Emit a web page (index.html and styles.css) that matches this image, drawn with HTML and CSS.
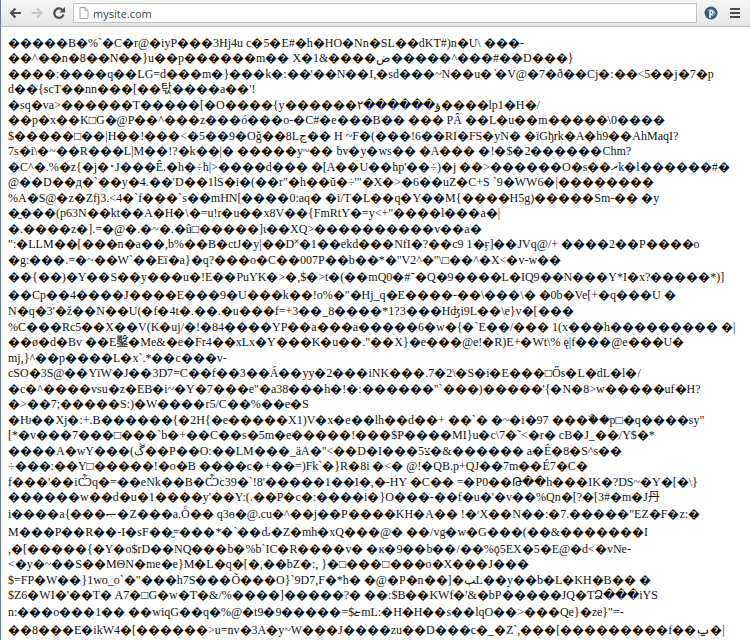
FILE: index.html
```
<!DOCTYPE html>
<html lang="en">
<head>
<meta charset="utf-8">
<title>mysite.com</title>
<link rel="stylesheet" href="styles.css">
</head>
<body>
<header class="toolbar">
<button class="tool" aria-label="Back"><svg viewBox="0 0 14 14"><path d="M13 7H3M7.500 2.500L3 7l4.500 4.500" fill="none" stroke="#505050" stroke-width="2.200"/></svg></button>
<button class="tool" aria-label="Forward" disabled><svg viewBox="0 0 14 14"><path d="M1.500 7h10M7 2.500l4.500 4.500L7 11.500" fill="none" stroke="#c8c8c8" stroke-width="2.200"/></svg></button>
<button class="tool" aria-label="Reload"><svg viewBox="0 0 14 14"><path d="M10.500 4A4.700 4.700 0 1 0 11.500 8.500" fill="none" stroke="#505050" stroke-width="2.200"/><path d="M13 1v5.500H7.500z" fill="#505050"/></svg></button>
<div class="omnibox">
<svg class="page-icon" viewBox="0 0 10 12"><path d="M1 .5h5l3 3v8H1zM6 .5v3h3" fill="#fff" stroke="#a4a4a4"/></svg>
<input class="address" type="text" aria-label="Address" value="mysite.com">
</div>
<button class="tool" aria-label="Extension"><svg viewBox="0 0 14 14"><circle cx="7" cy="7" r="6.500" fill="#315a85"/><path d="M3.800 4.800A4.200 4.200 0 0 1 11 7.500c-.5 2-2.500 2.500-4.500 2.200" fill="none" stroke="#9db8d1" stroke-width="1"/><path d="M6 12V5h1.500a1.600 1.600 0 0 1 0 3.200H6" fill="none" stroke="#f2f6fa" stroke-width="1.500"/></svg></button>
<button class="tool menu" aria-label="Menu"><svg viewBox="0 0 14 14"><path d="M2 3h10M2 7h10M2 11h10" stroke="#4a4a4a" stroke-width="2"/></svg></button>
</header>
<main class="content">
<p>�����B�%`�C�r@�iyP���3Hj4u c�5�E#�h�HO�Nn�SL��dKT#)n�U\ ���-</p>
<p>��^��n�8��N��}u��p������m�� X�1&amp;����ض�����^���#��D���}</p>
<p>����:����q��LG=d���m�}���k�:��'��N��I,�sd���~N��u� ̓�V@�7�ð��Cj�:��&lt;5��j�7�p</p>
<p>d��{scT��nn���[��탃����a��'!</p>
<p>�sq�va&gt;������T�����[�O����{y������۲������ؤ����lp1�H�/</p>
<p>��p�x��K□G�@P��^���z���ó���o-�C#�e���B�� ��� PÂ ��L�u��m�����\0����</p>
<p>$�����□��|H��!���&lt;�5��9�Oğ��8Lڃ�� H ~F�(���!6��RI�FS�yN� �ïGђrk�A�h9��AhMaqI?</p>
<p>7s�i\�~��R���L|M��!?�k��|� �����y~�� bv�y�ws�� �A��� �!�$�2������Chm?</p>
<p>�C^�.%�z{�j�･J���Ê.�h�÷h|&gt;����d��� �[A��U��hp'��÷)�j ��&gt;������O�s��ރk�l������#�</p>
<p>@��D��д�`��y�4.��'D��1lS�i�(��r"�h��ŭ�÷'"�X�&gt;�6��uZ�C+S `9�WW6�|��������</p>
<p>%A�S@�z�Zfj3.&lt;4�`f���`s��mHN[����0:aq� �i/T�L��q�Y��M{����H5g)�����Sm-�� �y</p>
<p>�̱���(p63N��kt��A�H�\�=u!r�u��x8V��{FmRtY�=y&lt;+"����l���a�|</p>
<p>�.����z�].=�@�.�~�.�û□�����]ɩ��XQ&gt;����������v��a�</p>
<p>":�LLM��[���n�a��,b%��B�ctJ�y|��D˟�1��ekd���NfI�?��c9 1�ӻ]��JVq@/+ ����2��P����o</p>
<p>�g:���.=�~��W`��Eï�a}�q?���o�C��007P��b��*�"V2^�"\□��^�X&lt;�v-w��</p>
<p class="tall">��{��)�Y��S��y���u�!E��PuYK�&gt;�,$�&gt;t�(��mQ0�#־�Q�9����L�IQ9��N���Y*I�x?�����*)]</p>
<p class="tall">��Cp��4����J����E���9�U���k��!o%�"�Hj_q�E����-��\���\� �0b�Ve[+�q���U �</p>
<p>N�q�3'�ž��N��U(�f�4t�.��.�u���f=+3��_8����*1?3���Hʤi9L��\e}v�[���</p>
<p>%C���Rc5��X��V(K�uj/�!�84����YP��a���a�����6�w�{�`E��/��� 1(x���h��������� �|</p>
<p>��ø�d�Bv ��E鑿�Me&amp;�e�Fr4��xLx�Y���K�u��."��X}�e���@e!�R)E+�Wt\% ę|f���@e���U�</p>
<p>mj,}^��p����L�x`.*��c���v-</p>
<p>cSO�3S@��YïW�J��3D7=C��f��3��Á��yy�2���iNK���.7�2\�S�i�E���□Ős�L�dL�l�/</p>
<p>�c�^����vsu�z�EB�i~�Y�7���e"�a38���h�!�:������"`���)�����'{�N�8&gt;w�����uf�H?</p>
<p>�&gt;��7;�����S:)�W����r5/C��%��e�S</p>
<p>�Ƕ��Xj�:+.B������{�2H{�e�����X1)V�x�e��lh��d��+ ��`� �~�i�97 ���ۜ��p□�q����sy"</p>
<p>[*�v���7���□���`b�+��C��s�5m�e�����!���$P����MI}u�c\7�˜&lt;�r� cB�J_��/Y$�*</p>
<p>����A�wY���(ڴ��P��O:��LM���_äA�"&lt;��D�I���5צ�&amp;������ a�Ȇ�8�S^s��</p>
<p>÷���:��Y□�����!�o�B ����c�+��=)Fk`�}R�8i �&lt;� @!�QB.p+QJ��7m��É7�C�</p>
<p>f���'��iѼq�=��eNk��B�Ѽc39�`!8'�����1��I�,�-HY �C�� =�P0��Թ��h���IK�?DS~�Y�[�\}</p>
<p>������w��d�u�1����y'��Y:(.��P�c�:����i�}O���-��f�u�'�v��%Qn�[?�[3#�m�J丹</p>
<p class="tall">i����a{���ޞ�Z���a.Ȫ�� q3ɵ�@.cu�^��j��P����KH�A�� !�׳X��N��:�7.�����"EZ�F�z:�</p>
<p class="tall">M���P��R��-I�sF��̮=���*�`��ԃ�Z�mh�xQ���@� ��/vg�w�G���(��&amp;�������I</p>
<p>,�[�����{�Y�o$rD��NQ���b�%b`IC�R����v� �ĸ�9��b��/��%ǭ5EX�5�E@�d&lt;�vNe-</p>
<p>&lt;�y�~��S��MΘN�me�e}M�L�q�[�,��bZ�:, }�□���□���o�X���J���</p>
<p>$=FP�W��}1wo_o`�"���h7S���Õ���O}`9D7,F�*h� �@�P�n��]�ﭓL��y��b�L�KH�B�� �</p>
<p>$Z6�WI�'��T� A7�□G�w�T�&amp;/%����]�����?� ��:$B��KWf�'&amp;�bP�����JQ�TՁ���iYS</p>
<p class="tall">n:���o���1�� ��wiqG��q�%@�t9�9�����=$ޏmL:�H�H��s��lqO��&gt;���Qe}�ze}"=-</p>
<p class="tall">��8���E�ikW4�[������&gt;u=nv�3A�y~W���J����zu��D���c�_�Z`,���[���������f��ݐ�|</p>
</main>
</body>
</html>
```
FILE: styles.css
```
html {
  min-height: 100%;
  display: grid;
}

body {
  margin: 0;
  border-left: 1px solid #6f7c8a;
  background: #fff;
  color: #111;
  font: 12px "Liberation Serif", "Noto Sans CJK KR", serif;
  overflow: hidden;
}

.toolbar {
  display: flex;
  align-items: center;
  gap: 6px;
  height: 26px;
  padding: 0 7px 0 6px;
  border-bottom: 1px solid #b8b8b8;
  background: linear-gradient(#f5f5f5, #e6e6e6);
}

.tool {
  width: 16px;
  height: 16px;
  padding: 1px;
  border: 0;
  background: none;
}

.menu {
  margin-left: 2px;
}

.tool svg {
  display: block;
  width: 100%;
  height: 100%;
}

.omnibox {
  display: flex;
  flex: 1;
  align-items: center;
  gap: 4px;
  height: 18px;
  padding-left: 5px;
  border: 1px solid #c2c2c2;
  background: #fff;
}

.page-icon {
  width: 10px;
  height: 12px;
}

.address {
  flex: 1;
  min-width: 0;
  padding: 0;
  border: 0;
  outline: 0;
  background: none;
  color: #444;
  font: 11px "Open Sans", sans-serif;
}

.content {
  padding: 8px 0 0 7px;
}

.content p {
  height: 15px;
  margin: 0;
  line-height: 15px;
  white-space: nowrap;
}

.content p:nth-child(odd) {
  height: 16px;
  line-height: 16px;
}

.content .tall.tall {
  height: 18px;
  line-height: 18px;
}
```
